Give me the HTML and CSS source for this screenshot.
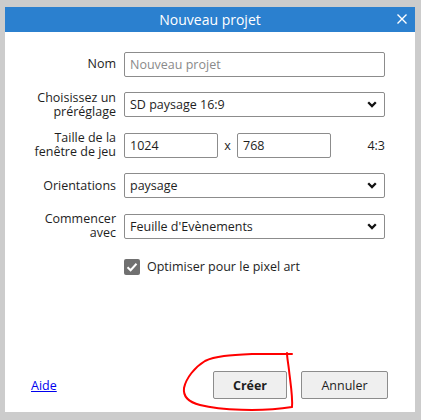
FILE: index.html
```html
<!DOCTYPE html>
<html lang="fr">
<head>
<meta charset="utf-8">
<title>Nouveau projet</title>
<link rel="stylesheet" href="styles.css">
</head>
<body>
<div class="dialog">
  <div class="titlebar">
    <span class="title">Nouveau projet</span>
    <button class="close" aria-label="Fermer">
      <svg width="10" height="10" viewBox="0 0 10 10"><path d="M0.5 0.5 L9.5 9.5 M9.5 0.5 L0.5 9.5" stroke="#fff" stroke-width="1.4" fill="none"/></svg>
    </button>
  </div>
  <div class="form">
    <div class="row">
      <label class="label">Nom</label>
      <input class="field" type="text" placeholder="Nouveau projet">
    </div>
    <div class="row">
      <label class="label">Choisissez un préréglage</label>
      <div class="select field"><span>SD paysage 16:9</span><svg class="chev" width="10" height="7" viewBox="0 0 10 7"><path d="M1.2 1.2 L5 5 L8.8 1.2" stroke="#111" stroke-width="2.3" fill="none"/></svg></div>
    </div>
    <div class="row">
      <label class="label">Taille de la fenêtre de jeu</label>
      <div class="size">
        <input class="field num" type="text" value="1024">
        <span class="times">x</span>
        <input class="field num" type="text" value="768">
        <span class="ratio">4:3</span>
      </div>
    </div>
    <div class="row">
      <label class="label">Orientations</label>
      <div class="select field"><span>paysage</span><svg class="chev" width="10" height="7" viewBox="0 0 10 7"><path d="M1.2 1.2 L5 5 L8.8 1.2" stroke="#111" stroke-width="2.3" fill="none"/></svg></div>
    </div>
    <div class="row">
      <label class="label">Commencer avec</label>
      <div class="select field"><span>Feuille d'Evènements</span><svg class="chev" width="10" height="7" viewBox="0 0 10 7"><path d="M1.2 1.2 L5 5 L8.8 1.2" stroke="#111" stroke-width="2.3" fill="none"/></svg></div>
    </div>
    <div class="row">
      <span></span>
      <div class="check">
        <span class="box"><svg width="16" height="16" viewBox="0 0 16 16"><path d="M3.5 8.2 L6.6 11.2 L12.5 4.8" stroke="#fff" stroke-width="2" fill="none"/></svg></span>
        <span>Optimiser pour le pixel art</span>
      </div>
    </div>
  </div>
  <div class="footer">
    <a class="help" href="#">Aide</a>
    <button class="btn primary">Créer</button>
    <button class="btn">Annuler</button>
  </div>
</div>
<svg class="scribble" width="421" height="420" viewBox="0 0 421 420"><path d="M292 354 L252 354 C230 355 215 356 205 361 C195 367 186 378 184 388 C183 396 188 402 200 405 C220 410 260 412 292 407 C293 397 290 380 289 370 C288 362 287 357 287 353" stroke="#f00" stroke-width="2" fill="none" stroke-linecap="round"/></svg>
</body>
</html>
```
FILE: styles.css
```css
html, body {
  margin: 0;
  padding: 0;
}
body {
  width: 421px;
  height: 420px;
  background: #cccccc;
  font-family: "Open Sans", "Noto Sans", sans-serif;
  font-size: 12.5px;
  color: #1e1e1e;
  position: relative;
  overflow: hidden;
}
.dialog {
  position: absolute;
  left: 5px;
  top: 7px;
  width: 410px;
  height: 405px;
  background: #fff;
  display: flex;
  flex-direction: column;
}
.titlebar {
  height: 25px;
  background: #2b80cf;
  display: flex;
  align-items: center;
  justify-content: center;
  position: relative;
}
.title {
  color: #fff;
  font-size: 14px;
}
.close {
  position: absolute;
  right: 8px;
  top: 7px;
  width: 10px;
  height: 11px;
  padding: 0;
  border: 0;
  background: none;
  display: flex;
}
.form {
  padding: 15px 30px 0 29px;
  display: flex;
  flex-direction: column;
  gap: 6.5px;
}
.row {
  display: grid;
  grid-template-columns: 82px 1fr;
  column-gap: 8px;
  align-items: center;
  height: 34px;
}
.label {
  text-align: right;
  line-height: 14px;
}
.field {
  box-sizing: border-box;
  height: 25px;
  border: 1px solid #8c8c8c;
  border-radius: 2px;
  font: inherit;
  color: #1e1e1e;
  padding: 0 5px;
  background: #fff;
  width: 100%;
  margin: 0;
}
.field::placeholder {
  color: #8a8a8a;
}
.select {
  display: flex;
  align-items: center;
  justify-content: space-between;
  padding-right: 7px;
}
.size {
  display: flex;
  align-items: center;
}
.num {
  width: 94px;
}
.times {
  width: 19px;
  text-align: center;
}
.ratio {
  margin-left: auto;
}
.check {
  display: flex;
  align-items: center;
  gap: 7px;
}
.box {
  width: 16px;
  height: 16px;
  background: #707070;
  border-radius: 2px;
  display: flex;
}
.footer {
  margin-top: auto;
  display: flex;
  align-items: center;
  padding: 0 27px 13px 26px;
  gap: 14px;
}
.help {
  margin-right: auto;
  color: #0000ee;
  text-decoration: underline;
}
.btn {
  height: 28px;
  box-sizing: border-box;
  border: 1px solid #8c8c8c;
  border-radius: 2px;
  background: #efefef;
  font: inherit;
  color: #1e1e1e;
  width: 87px;
  padding: 0;
}
.btn.primary {
  width: 74px;
  font-weight: bold;
}
.scribble {
  position: absolute;
  left: 0;
  top: 0;
  pointer-events: none;
}
```
